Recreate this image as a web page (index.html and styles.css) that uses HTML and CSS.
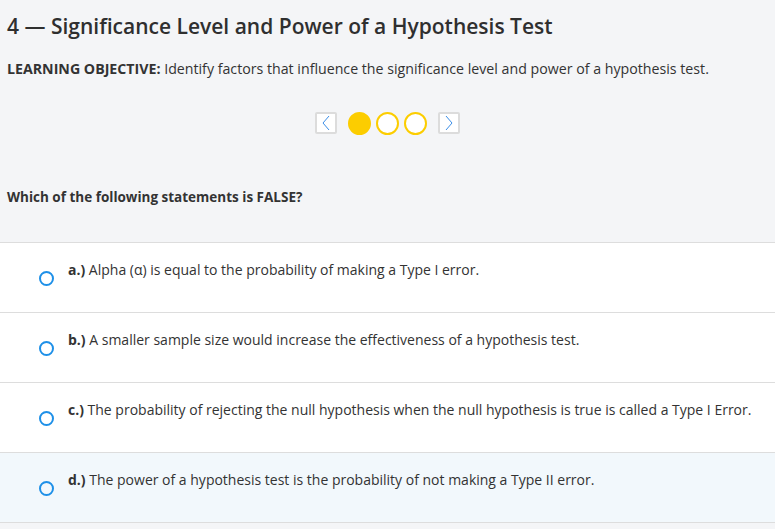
FILE: index.html
```html
<!DOCTYPE html>
<html lang="en">
<head>
<meta charset="utf-8">
<title>Significance Level and Power</title>
<link rel="stylesheet" href="styles.css">
</head>
<body>
<div class="intro">
  <h1 class="title">4 — Significance Level and Power of a Hypothesis Test</h1>
  <p class="objective"><strong>LEARNING OBJECTIVE:</strong> Identify factors that influence the significance level and power of a hypothesis test.</p>
  <div class="pager">
    <button class="pager-btn" aria-label="Previous">
      <svg width="10" height="16" viewBox="0 0 10 16"><path d="M8 1 L2 8 L8 15" fill="none" stroke="#3b8ee8" stroke-width="1"/></svg>
    </button>
    <span class="dot dot-filled"></span>
    <span class="dot"></span>
    <span class="dot"></span>
    <button class="pager-btn" aria-label="Next">
      <svg width="10" height="16" viewBox="0 0 10 16"><path d="M2 1 L8 8 L2 15" fill="none" stroke="#3b8ee8" stroke-width="1"/></svg>
    </button>
  </div>
  <p class="question">Which of the following statements is FALSE?</p>
</div>
<ul class="options">
  <li class="option"><span class="radio"></span><span class="option-text"><b>a.)</b> Alpha (α) is equal to the probability of making a Type I error.</span></li>
  <li class="option"><span class="radio"></span><span class="option-text"><b>b.)</b> A smaller sample size would increase the effectiveness of a hypothesis test.</span></li>
  <li class="option"><span class="radio"></span><span class="option-text"><b>c.)</b> The probability of rejecting the null hypothesis when the null hypothesis is true is called a Type I Error.</span></li>
  <li class="option option-hover"><span class="radio"></span><span class="option-text"><b>d.)</b> The power of a hypothesis test is the probability of not making a Type II error.</span></li>
</ul>
</body>
</html>
```
FILE: styles.css
```css
html, body {
  margin: 0;
  padding: 0;
  background: #f4f5f7;
  font-family: "Open Sans", "Noto Sans", sans-serif;
  color: #333;
}
.intro {
  padding: 0 7px;
}
.title {
  margin: 0;
  padding-top: 12px;
  font-size: 21px;
  line-height: 28px;
  font-weight: 600;
  color: #2f2f2f;
}
.objective {
  margin: 20px 0 0;
  font-size: 14.2px;
  line-height: 18px;
}
.objective strong {
  font-weight: 700;
}
.pager {
  display: flex;
  justify-content: center;
  align-items: center;
  gap: 5px;
  margin-top: 33px;
  height: 24px;
}
.pager-btn {
  width: 22px;
  height: 22px;
  padding: 0;
  margin: 0 6px;
  border: 2px solid #dcdcdc;
  border-radius: 2px;
  background: #fff;
  display: flex;
  align-items: center;
  justify-content: center;
}
.dot {
  width: 23px;
  height: 23px;
  box-sizing: border-box;
  border-radius: 50%;
  border: 2.5px solid #fccd00;
  background: #fff;
}
.dot-filled {
  background: #fccd00;
}
.question {
  margin: 53px 0 0;
  padding-bottom: 36px;
  font-size: 13.5px;
  line-height: 18px;
  font-weight: 700;
}
.options {
  list-style: none;
  margin: 0;
  padding: 0;
  border-top: 1px solid #dddddd;
}
.option {
  display: flex;
  align-items: flex-start;
  height: 70px;
  box-sizing: border-box;
  padding: 18px 0 0 39px;
  background: #fff;
  border-bottom: 1px solid #dddddd;
  font-size: 14px;
  line-height: 18px;
}
.option-hover {
  background: #f2f8fc;
}
.radio {
  width: 15px;
  height: 15px;
  box-sizing: border-box;
  border: 2.5px solid #1e90e8;
  border-radius: 50%;
  margin-top: 10px;
  margin-right: 14px;
  flex: none;
}
.option-text b {
  font-weight: 700;
}
```
